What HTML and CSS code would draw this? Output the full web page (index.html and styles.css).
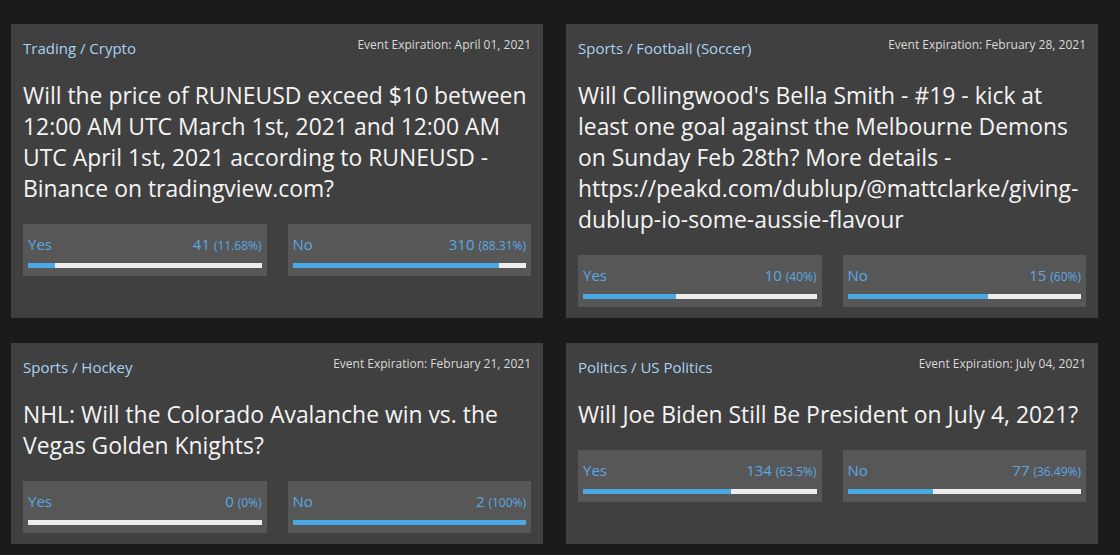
FILE: index.html
```html
<!DOCTYPE html>
<html lang="en">

<head>
  <meta charset="UTF-8">
  <meta name="viewport" content="width=device-width, initial-scale=1.0">
  <title>Events</title>
  <link rel="stylesheet" href="styles.css">
</head>

<body>

  <!-- Event list -->
  <div class="events">

    <div class="event-card">
      <div class="event-head">
        <span class="category">Trading / Crypto</span>
        <span class="expiry">Event Expiration: April 01, 2021</span>
      </div>
      <div class="question">Will the price of RUNEUSD exceed $10 between 12:00 AM UTC March 1st, 2021 and 12:00 AM UTC April 1st, 2021 according to RUNEUSD - Binance on tradingview.com?</div>
      <div class="votes">
        <div class="vote">
          <div class="vote-row"><span>Yes</span><span>41 <small>(11.68%)</small></span></div>
          <div class="bar"><div class="fill" style="width: 11.68%"></div></div>
        </div>
        <div class="vote">
          <div class="vote-row"><span>No</span><span>310 <small>(88.31%)</small></span></div>
          <div class="bar"><div class="fill" style="width: 88.31%"></div></div>
        </div>
      </div>
    </div>

    <div class="event-card">
      <div class="event-head">
        <span class="category">Sports / Football (Soccer)</span>
        <span class="expiry">Event Expiration: February 28, 2021</span>
      </div>
      <div class="question">Will Collingwood's Bella Smith - #19 - kick at least one goal against the Melbourne Demons on Sunday Feb 28th? More details - https://peakd.com/dublup/@mattclarke/giving-dublup-io-some-aussie-flavour</div>
      <div class="votes">
        <div class="vote">
          <div class="vote-row"><span>Yes</span><span>10 <small>(40%)</small></span></div>
          <div class="bar"><div class="fill" style="width: 40%"></div></div>
        </div>
        <div class="vote">
          <div class="vote-row"><span>No</span><span>15 <small>(60%)</small></span></div>
          <div class="bar"><div class="fill" style="width: 60%"></div></div>
        </div>
      </div>
    </div>

    <div class="event-card">
      <div class="event-head">
        <span class="category">Sports / Hockey</span>
        <span class="expiry">Event Expiration: February 21, 2021</span>
      </div>
      <div class="question">NHL: Will the Colorado Avalanche win vs. the Vegas Golden Knights?</div>
      <div class="votes">
        <div class="vote">
          <div class="vote-row"><span>Yes</span><span>0 <small>(0%)</small></span></div>
          <div class="bar"><div class="fill" style="width: 0%"></div></div>
        </div>
        <div class="vote">
          <div class="vote-row"><span>No</span><span>2 <small>(100%)</small></span></div>
          <div class="bar"><div class="fill" style="width: 100%"></div></div>
        </div>
      </div>
    </div>

    <div class="event-card">
      <div class="event-head">
        <span class="category">Politics / US Politics</span>
        <span class="expiry">Event Expiration: July 04, 2021</span>
      </div>
      <div class="question">Will Joe Biden Still Be President on July 4, 2021?</div>
      <div class="votes">
        <div class="vote">
          <div class="vote-row"><span>Yes</span><span>134 <small>(63.5%)</small></span></div>
          <div class="bar"><div class="fill" style="width: 63.5%"></div></div>
        </div>
        <div class="vote">
          <div class="vote-row"><span>No</span><span>77 <small>(36.49%)</small></span></div>
          <div class="bar"><div class="fill" style="width: 36.49%"></div></div>
        </div>
      </div>
    </div>

  </div>

</body>

</html>
```
FILE: styles.css
```css
body {
  margin: 0;
  background: #1b1b1b;
  font-family: "Open Sans", "Noto Sans", sans-serif;
}

.events {
  display: grid;
  grid-template-columns: 532px 532px;
  column-gap: 23px;
  row-gap: 25px;
  padding: 24px 0 0 11px;
}

.event-card {
  background: #404040;
  padding: 12px 12px 11px;
}

.event-head {
  display: flex;
  justify-content: space-between;
  align-items: flex-start;
}

.category {
  color: #a9d2f2;
  font-size: 15px;
  line-height: 20px;
  margin-top: 2px;
}

.expiry {
  color: #d9d9d9;
  font-size: 12px;
  line-height: 16px;
  margin-top: 1px;
}

.question {
  color: #f4f4f4;
  font-size: 22.9px;
  line-height: 31px;
  margin: 22px 0 20px;
}

.votes {
  display: grid;
  grid-template-columns: 1fr 1fr;
  column-gap: 21px;
}

.vote {
  background: #575757;
  padding: 10px 5px 8px;
}

.vote-row {
  display: flex;
  justify-content: space-between;
  color: #5aa9e2;
  font-size: 15px;
  line-height: 20px;
}

.vote-row small {
  font-size: 12px;
}

.bar {
  height: 5px;
  margin-top: 7px;
  background: #ececec;
}

.bar .fill {
  height: 100%;
  background: #4aa9e5;
}
```
